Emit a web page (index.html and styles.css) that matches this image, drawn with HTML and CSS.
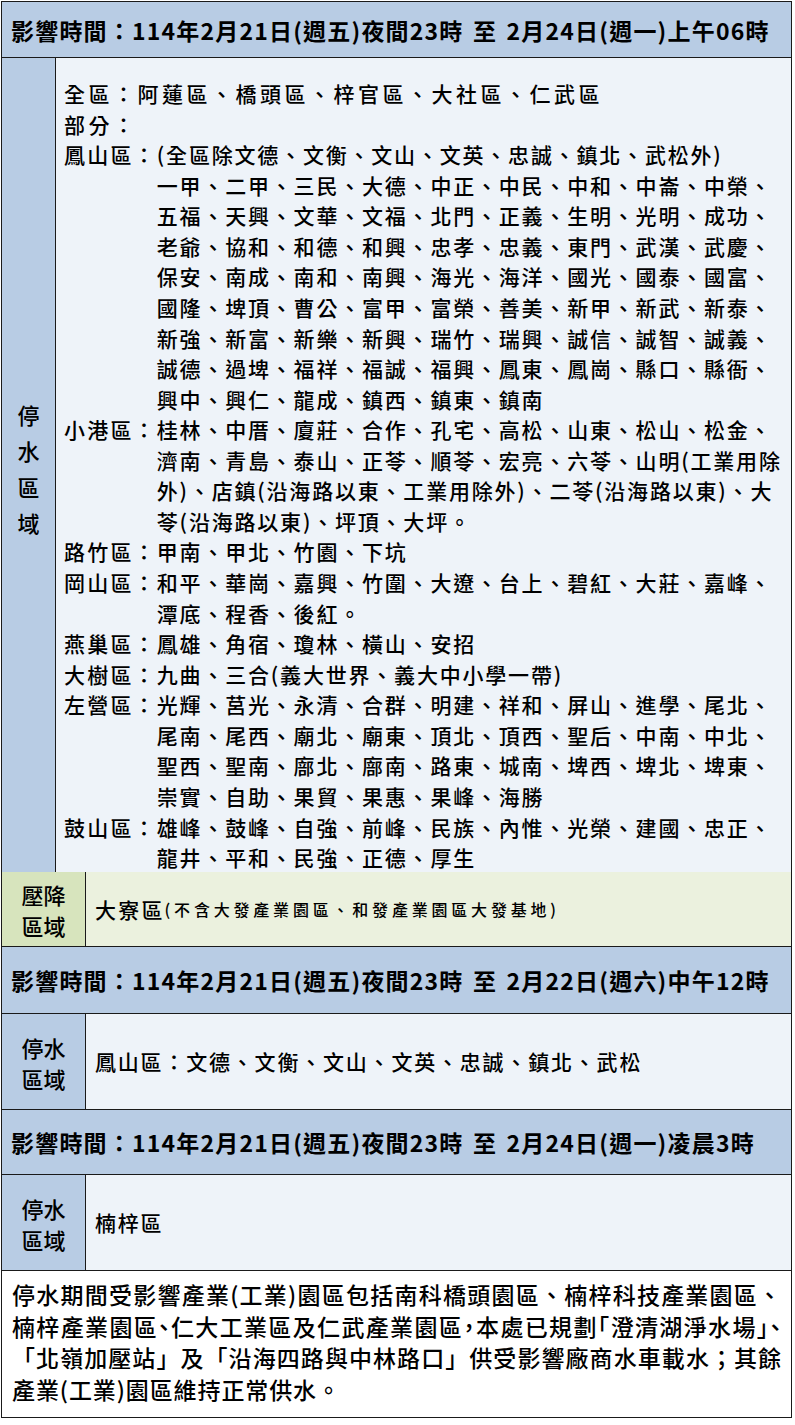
FILE: index.html
```html
<!DOCTYPE html>
<html lang="zh-Hant">
<head>
<meta charset="utf-8">
<title>停水公告</title>
<link rel="stylesheet" href="styles.css">
</head>
<body>
<div class="sheet">
  <div class="hdr h1">影響時間：114年2月21日(週五)夜間23時 至 2月24日(週一)上午06時</div>
  <div class="row main">
    <div class="lab lab-v">停<br>水<br>區<br>域</div>
    <div class="body">
      <div class="ln wide">全區：阿蓮區、橋頭區、梓官區、大社區、仁武區</div>
      <div class="ln wide">部分：</div>
      <div class="dist"><span class="dn">鳳山區：</span><span class="dl">(全區除文德、文衡、文山、文英、忠誠、鎮北、武松外)<br>一甲、二甲、三民、大德、中正、中民、中和、中崙、中榮、<br>五福、天興、文華、文福、北門、正義、生明、光明、成功、<br>老爺、協和、和德、和興、忠孝、忠義、東門、武漢、武慶、<br>保安、南成、南和、南興、海光、海洋、國光、國泰、國富、<br>國隆、埤頂、曹公、富甲、富榮、善美、新甲、新武、新泰、<br>新強、新富、新樂、新興、瑞竹、瑞興、誠信、誠智、誠義、<br>誠德、過埤、福祥、福誠、福興、鳳東、鳳崗、縣口、縣衙、<br>興中、興仁、龍成、鎮西、鎮東、鎮南</span></div>
      <div class="dist"><span class="dn">小港區：</span><span class="dl">桂林、中厝、廈莊、合作、孔宅、高松、山東、松山、松金、<br>濟南、青島、泰山、正苓、順苓、宏亮、六苓、山明(工業用除<br>外)、店鎮(沿海路以東、工業用除外)、二苓(沿海路以東)、大<br>苓(沿海路以東)、坪頂、大坪。</span></div>
      <div class="dist"><span class="dn">路竹區：</span><span class="dl">甲南、甲北、竹園、下坑</span></div>
      <div class="dist"><span class="dn">岡山區：</span><span class="dl">和平、華崗、嘉興、竹圍、大遼、台上、碧紅、大莊、嘉峰、<br>潭底、程香、後紅。</span></div>
      <div class="dist"><span class="dn">燕巢區：</span><span class="dl">鳳雄、角宿、瓊林、橫山、安招</span></div>
      <div class="dist"><span class="dn">大樹區：</span><span class="dl">九曲、三合(義大世界、義大中小學一帶)</span></div>
      <div class="dist"><span class="dn">左營區：</span><span class="dl">光輝、莒光、永清、合群、明建、祥和、屏山、進學、尾北、<br>尾南、尾西、廟北、廟東、頂北、頂西、聖后、中南、中北、<br>聖西、聖南、廍北、廍南、路東、城南、埤西、埤北、埤東、<br>崇實、自助、果貿、果惠、果峰、海勝</span></div>
      <div class="dist"><span class="dn">鼓山區：</span><span class="dl">雄峰、鼓峰、自強、前峰、民族、內惟、光榮、建國、忠正、<br>龍井、平和、民強、正德、厚生</span></div>
    </div>
  </div>
  <div class="row press">
    <div class="lab lab-w green">壓降<br>區域</div>
    <div class="body cell"><span class="big">大寮區</span><span class="small">(不含大發產業園區、和發產業園區大發基地)</span></div>
  </div>
  <div class="hdr h2">影響時間：114年2月21日(週五)夜間23時 至 2月22日(週六)中午12時</div>
  <div class="row sub">
    <div class="lab lab-w">停水<br>區域</div>
    <div class="body cell">鳳山區：文德、文衡、文山、文英、忠誠、鎮北、武松</div>
  </div>
  <div class="hdr h3">影響時間：114年2月21日(週五)夜間23時 至 2月24日(週一)凌晨3時</div>
  <div class="row sub">
    <div class="lab lab-w">停水<br>區域</div>
    <div class="body cell">楠梓區</div>
  </div>
  <div class="note">
    <span class="nl">停水期間受影響產業(工業)園區包括南科橋頭園區、楠梓科技產業園區、</span>
    <span class="nl">楠梓產業園區<span class="half">、</span>仁大工業區及仁武產業園區<span class="half">，</span>本處已規劃<span class="half">「</span>澄清湖淨水場<span class="half">」</span><span class="half">、</span></span>
    <span class="nl">「北嶺加壓站」及「沿海四路與中林路口」供受影響廠商水車載水；其餘</span>
    <span class="nl last">產業(工業)園區維持正常供水。</span>
  </div>
</div>
</body>
</html>
```

FILE: styles.css
```css
* {
  box-sizing: border-box;
  margin: 0;
  padding: 0;
}

html,
body {
  background: #ffffff;
}

body {
  margin: 0;
  font-family: "Noto Sans CJK TC", "Noto Sans CJK SC", "Noto Sans", sans-serif;
  color: #000000;
}

.sheet {
  margin: 1px 0 0 1px;
  width: 791px;
  border: 1px solid #1a1a1a;
  display: flex;
  flex-direction: column;
}

.hdr {
  display: flex;
  align-items: center;
  padding-left: 9px;
  background: #b8cce4;
  border-bottom: 1px solid #1a1a1a;
  font-size: 23px;
  font-weight: 700;
  letter-spacing: 1.2px;
  word-spacing: 3px;
  white-space: nowrap;
}

.h1 { height: 56px; }
.h2 { height: 67px; }
.h3 { height: 65px; }

.row {
  display: grid;
  border-bottom: 1px solid #1a1a1a;
}

.main {
  height: 814px;
  grid-template-columns: 54px 1fr;
}

.press {
  height: 75px;
  grid-template-columns: 84px 1fr;
  background: #ebf1de;
}

.sub {
  height: 96px;
  grid-template-columns: 84px 1fr;
}

.lab {
  background: #b8cce4;
  border-right: 1px solid #1a1a1a;
  display: flex;
  align-items: center;
  justify-content: center;
  text-align: center;
  font-size: 22px;
  font-weight: 500;
}

.lab-v {
  line-height: 36px;
  padding-top: 5px;
}

.lab-w {
  line-height: 31px;
  padding-top: 2px;
}

.green {
  background: #d7e4bd;
}

.body {
  background: #eef3f9;
  padding: 20px 0 0 8px;
  font-size: 21px;
  font-weight: 500;
  letter-spacing: 1.8px;
  line-height: 30.56px;
  white-space: nowrap;
}

.press .body {
  background: #ebf1de;
}

.wide {
  letter-spacing: 3.5px;
}

.dn {
  letter-spacing: 2.2px;
}

.cell {
  padding: 0 0 0 9px;
  display: flex;
  align-items: center;
}

.big {
  letter-spacing: 2.2px;
}

.small {
  font-size: 16px;
  letter-spacing: 3.8px;
}

.dist {
  display: grid;
  grid-template-columns: auto 1fr;
}

.note {
  height: 146px;
  padding: 8px 9px 0 10px;
  background: #ffffff;
  font-size: 23px;
  font-weight: 500;
  line-height: 31.5px;
  letter-spacing: 0.9px;
  display: flex;
  flex-direction: column;
}

.nl {
  display: block;
  text-align: justify;
  text-align-last: justify;
}

.nl.last {
  text-align-last: left;
}

.half {
  font-feature-settings: "halt" 1;
}
```
